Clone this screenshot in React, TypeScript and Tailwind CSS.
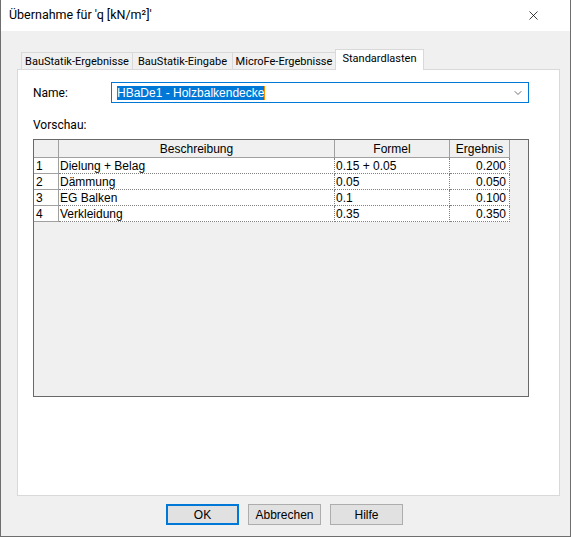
import { ChevronDown, X } from 'lucide-react';

const rows = [
  { nr: '1', text: 'Dielung + Belag', formel: '0.15 + 0.05', erg: '0.200' },
  { nr: '2', text: 'Dämmung', formel: '0.05', erg: '0.050' },
  { nr: '3', text: 'EG Balken', formel: '0.1', erg: '0.100' },
  { nr: '4', text: 'Verkleidung', formel: '0.35', erg: '0.350' },
];

export default function App() {
  return (
    <div className="w-[571px] h-[537px] flex flex-col bg-[#f0f0f0] border-x border-b border-[#6e6e6e] font-['Roboto',sans-serif] text-[12px] text-black overflow-hidden whitespace-nowrap">
      {/* Title bar */}
      <div className="h-[31px] shrink-0 bg-white flex items-center justify-between pl-[8px] pr-[29px]">
        <span className="text-[12.5px] leading-none">Übernahme für 'q [kN/m²]'</span>
        <X className="w-[15px] h-[15px] text-black" strokeWidth={1.2} />
      </div>

      {/* Tabs */}
      <div className="flex items-end h-[21px] mt-[17px] ml-[20px] relative z-10 text-[11px]">
        <div className="w-[112px] h-[17px] flex items-center justify-center border border-b-0 border-[#d9d9d9] leading-none">
          BauStatik-Ergebnisse
        </div>
        <div className="w-[101px] h-[17px] flex items-center justify-center border border-b-0 border-[#d9d9d9] -ml-px leading-none">
          BauStatik-Eingabe
        </div>
        <div className="w-[104px] h-[17px] flex items-center justify-center border border-b-0 border-[#d9d9d9] -ml-px leading-none">
          MicroFe-Ergebnisse
        </div>
        <div className="w-[89px] h-[21px] flex items-center justify-center pb-[3px] bg-white border border-b-0 border-[#d9d9d9] -ml-px -mb-px leading-none">
          Standardlasten
        </div>
      </div>

      {/* Panel */}
      <div className="ml-[16px] mr-[10px] h-[427px] bg-white border border-[#d9d9d9] pl-[15px] pr-[30px] pt-[12px]">
        <div className="flex items-center h-[21px]">
          <span className="w-[78px]">Name:</span>
          <div className="flex-1 h-[21px] border border-[#0078d7] flex items-center justify-between pl-[5px] pr-[4px] font-['Liberation_Sans',Arial,sans-serif]">
            <span className="bg-[#0078d7] text-white leading-[14px] border-r border-[#ff8c00]">HBaDe1 - Holzbalkendecke</span>
            <ChevronDown className="w-[12px] h-[12px] text-[#333333]" strokeWidth={1.4} />
          </div>
        </div>
        <div className="mt-[15px] h-[14px] leading-[14px]">Vorschau:</div>

        {/* Grid */}
        <div className="mt-[7px] h-[258px] border border-[#696969] bg-[#f0f0f0] font-['Liberation_Sans',Arial,sans-serif] text-[12px] leading-none">
          <div className="flex h-[18px]">
            <div className="w-[25px] border-r border-b border-[#a0a0a0]" />
            <div className="w-[276px] border-r border-b border-[#a0a0a0] flex items-center justify-center">Beschreibung</div>
            <div className="w-[115px] border-r border-b border-[#a0a0a0] flex items-center justify-center">Formel</div>
            <div className="w-[60px] border-r border-b border-[#a0a0a0] flex items-center justify-center">Ergebnis</div>
          </div>
          {rows.map((r) => (
            <div key={r.nr} className="flex h-[16px]">
              <div className="w-[25px] bg-white border-r border-b border-[#a0a0a0] flex items-center pl-[2px] pt-[1px]">{r.nr}</div>
              <div className="w-[276px] bg-white border-r border-b border-dotted border-[#808080] flex items-center pl-[1px] pt-[1px]">{r.text}</div>
              <div className="w-[115px] bg-white border-r border-b border-dotted border-[#808080] flex items-center pl-[1px] pt-[1px]">{r.formel}</div>
              <div className="w-[60px] bg-white border-r border-b border-dotted border-[#808080] flex items-center justify-end pr-[3px] pt-[1px]">{r.erg}</div>
            </div>
          ))}
        </div>
      </div>

      {/* Buttons */}
      <div className="flex justify-center gap-[9px] mt-[8px] pr-[2px] font-['Liberation_Sans',Arial,sans-serif]">
        <button className="w-[73px] h-[21px] bg-[#e1e1e1] border-2 border-[#0078d7] leading-none">OK</button>
        <button className="w-[73px] h-[21px] bg-[#e1e1e1] border border-[#adadad] leading-none">Abbrechen</button>
        <button className="w-[73px] h-[21px] bg-[#e1e1e1] border border-[#adadad] leading-none">Hilfe</button>
      </div>
    </div>
  );
}
